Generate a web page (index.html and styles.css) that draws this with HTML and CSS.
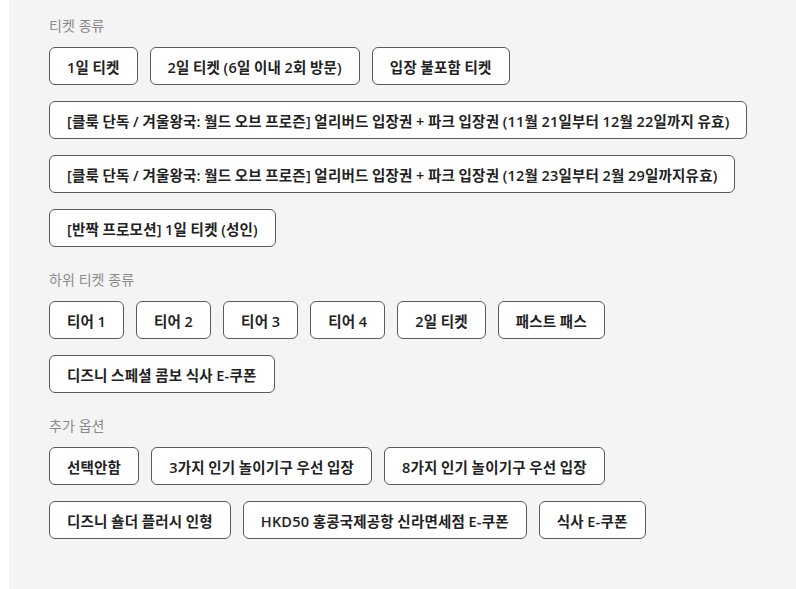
FILE: index.html
```html
<!DOCTYPE html>
<html lang="ko">
<head>
<meta charset="utf-8">
<title>티켓 옵션</title>
<link rel="stylesheet" href="styles.css">
</head>
<body>
<div class="panel">
  <section class="group">
    <div class="group-title">티켓 종류</div>
    <div class="options">
      <button class="opt">1일 티켓</button>
      <button class="opt">2일 티켓 (6일 이내 2회 방문)</button>
      <button class="opt">입장 불포함 티켓</button>
      <button class="opt">[클룩 단독 / 겨울왕국: 월드 오브 프로즌] 얼리버드 입장권 + 파크 입장권 (11월 21일부터 12월 22일까지 유효)</button>
      <button class="opt">[클룩 단독 / 겨울왕국: 월드 오브 프로즌] 얼리버드 입장권 + 파크 입장권 (12월 23일부터 2월 29일까지유효)</button>
      <button class="opt">[반짝 프로모션] 1일 티켓 (성인)</button>
    </div>
  </section>
  <section class="group">
    <div class="group-title">하위 티켓 종류</div>
    <div class="options">
      <button class="opt">티어 1</button>
      <button class="opt">티어 2</button>
      <button class="opt">티어 3</button>
      <button class="opt">티어 4</button>
      <button class="opt">2일 티켓</button>
      <button class="opt">패스트 패스</button>
      <button class="opt">디즈니 스페셜 콤보 식사 E-쿠폰</button>
    </div>
  </section>
  <section class="group">
    <div class="group-title">추가 옵션</div>
    <div class="options">
      <button class="opt">선택안함</button>
      <button class="opt">3가지 인기 놀이기구 우선 입장</button>
      <button class="opt">8가지 인기 놀이기구 우선 입장</button>
      <button class="opt">디즈니 숄더 플러시 인형</button>
      <button class="opt">HKD50 홍콩국제공항 신라면세점 E-쿠폰</button>
      <button class="opt">식사 E-쿠폰</button>
    </div>
  </section>
</div>
</body>
</html>
```

FILE: styles.css
```css
html, body {
  margin: 0;
  padding: 0;
  background: #ffffff;
}

body {
  font-family: "Open Sans", "Noto Sans CJK KR", sans-serif;
}

.panel {
  margin-left: 9px;
  min-height: 589px;
  box-sizing: border-box;
  background: #f4f4f4;
  padding: 15px 40px 0 40px;
}

.group + .group {
  margin-top: 22px;
}

.group-title {
  font-family: "Noto Sans CJK KR", sans-serif;
  font-size: 14px;
  line-height: 20px;
  color: #8a8a8a;
  margin-bottom: 12px;
}

.options {
  display: flex;
  flex-wrap: wrap;
  gap: 16px 12px;
  max-width: 710px;
}

.opt {
  display: inline-flex;
  align-items: center;
  height: 38px;
  box-sizing: border-box;
  padding: 0 17px;
  border: 1px solid #5a5a5a;
  border-radius: 6px;
  background: #ffffff;
  color: #222222;
  font-family: inherit;
  font-size: 14.5px;
  font-weight: 600;
  letter-spacing: 0.2px;
  word-spacing: -0.5px;
  white-space: nowrap;
  cursor: pointer;
}
```
